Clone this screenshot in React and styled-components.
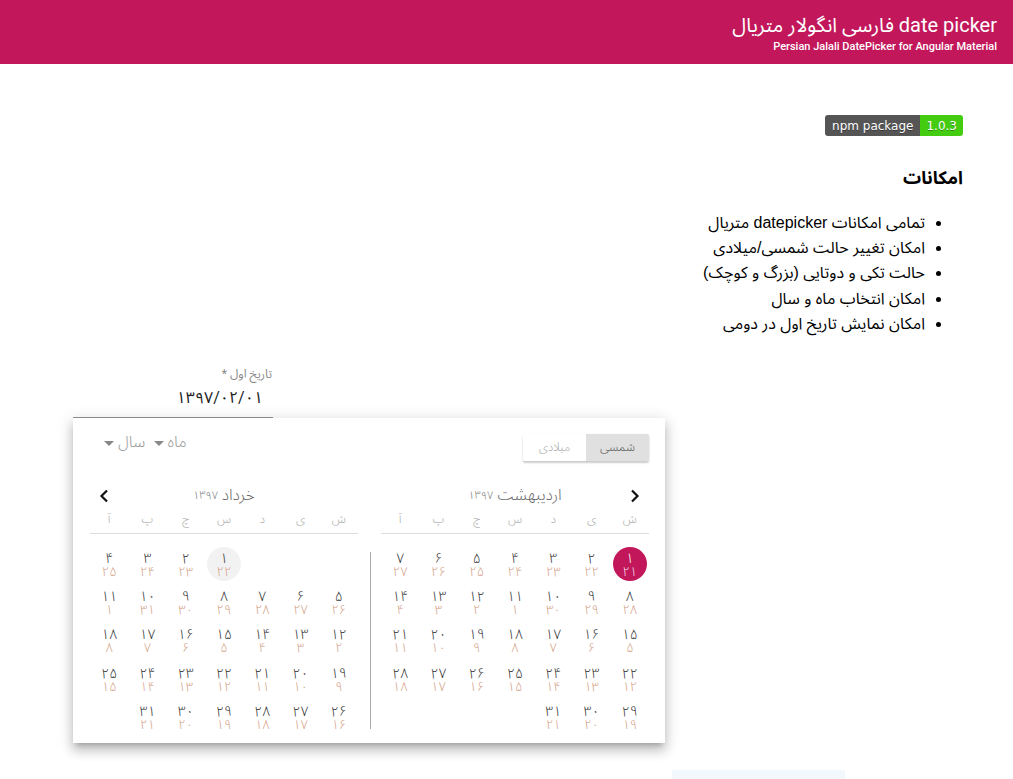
import React from 'react';
import styled, { createGlobalStyle } from 'styled-components';

const GlobalStyle = createGlobalStyle`
  body {
    margin: 0;
    background: #fff;
    font-family: Roboto, "Noto Sans Arabic", "DejaVu Sans", sans-serif;
    color: #000;
  }
`;

const fa = (n) => String(n).replace(/\d/g, (d) => '۰۱۲۳۴۵۶۷۸۹'[d]);

const Header = styled.header`
  height: 64px;
  background: #c2185b;
  color: #fff;
  display: flex;
  flex-direction: column;
  align-items: flex-start;
  justify-content: center;
  padding: 2px 16px 0;
  box-sizing: border-box;
  direction: rtl;
`;

const Title = styled.h1`
  margin: 0;
  font-size: 20px;
  font-weight: 400;
  line-height: 26px;
`;

const Subtitle = styled.div`
  font-size: 11px;
  font-weight: 500;
  line-height: 14px;
  margin-top: 2px;
  direction: ltr;
`;

const Main = styled.main`
  direction: rtl;
  padding: 51px 50px 0;
`;

const Badge = styled.div`
  display: flex;
  width: fit-content;
  direction: ltr;
  height: 21px;
  border-radius: 3px;
  overflow: hidden;
  font-family: "DejaVu Sans", Verdana, sans-serif;
  font-size: 12px;
  color: #fff;
  text-shadow: 0 1px 0 rgba(1, 1, 1, 0.35);
`;

const BadgePart = styled.span`
  display: flex;
  align-items: center;
  padding: 0 ${({ $pad }) => $pad}px;
  background: ${({ $bg }) => $bg};
`;

const SectionTitle = styled.h3`
  margin: 30px 0 0;
  font-family: "Liberation Sans", "Noto Sans Arabic", "DejaVu Sans", sans-serif;
  font-size: 18px;
  font-weight: 700;
  line-height: 24px;
`;

const FeatureList = styled.ul`
  margin: 20px 0 0;
  padding: 0 38px 0 0;
  font-family: "Liberation Sans", "Noto Sans Arabic", "DejaVu Sans", sans-serif;
  font-size: 16px;
  line-height: 25.2px;
`;

const PickerArea = styled.section`
  direction: ltr;
  padding-left: 73px;
  margin-top: 30px;
`;

const Field = styled.div`
  position: relative;
  width: 200px;
  direction: rtl;
  border-bottom: 1px solid #949494;
  padding-bottom: 9px;
`;

const FieldLabel = styled.div`
  font-size: 12px;
  color: #8a8a8a;
  line-height: 16px;
  padding-right: 1px;
`;

const FieldValue = styled.div`
  font-size: 16px;
  color: #222;
  line-height: 20px;
  padding-right: 10px;
  margin-top: 6px;
`;

const Popup = styled.div`
  position: absolute;
  top: calc(100% + 1px);
  left: 0;
  width: 592px;
  height: 325px;
  background: #fff;
  direction: rtl;
  box-sizing: border-box;
  padding: 16px 16px 0 17px;
  box-shadow: 0 5px 5px -3px rgba(0, 0, 0, 0.2), 0 8px 10px 1px rgba(0, 0, 0, 0.14),
    0 3px 14px 2px rgba(0, 0, 0, 0.12);
  z-index: 2;
`;

const TopBar = styled.div`
  display: flex;
  justify-content: space-between;
  align-items: flex-start;
  height: 27px;
`;

const ToggleGroup = styled.div`
  display: flex;
  border-radius: 2px;
  overflow: hidden;
  box-shadow: 0 2px 2px rgba(0, 0, 0, 0.2), 0 0 1px rgba(0, 0, 0, 0.12);
`;

const ToggleButton = styled.button`
  width: 63px;
  height: 27px;
  border: 0;
  padding: 0;
  font-family: inherit;
  font-weight: 300;
  font-size: 12px;
  color: ${({ $active }) => ($active ? '#555' : '#aaa')};
  background: ${({ $active }) => ($active ? '#e0e0e0' : '#fff')};
`;

const SelectGroup = styled.div`
  display: flex;
  gap: 8px;
  margin-left: 14px;
  margin-top: -2px;
  font-size: 16px;
  font-weight: 300;
  color: #999;
  line-height: 20px;
`;

const SelectItem = styled.span`
  display: flex;
  align-items: center;
  gap: 4px;

  &::after {
    content: '';
    border-left: 5px solid transparent;
    border-right: 5px solid transparent;
    border-top: 5px solid #888;
    margin-top: 2px;
  }
`;

const Months = styled.div`
  display: grid;
  grid-template-columns: 268px 268px;
  justify-content: space-between;
  margin-top: 24px;
`;

const Month = styled.div`
  display: flex;
  flex-direction: column;
`;

const MonthHeader = styled.div`
  position: relative;
  display: flex;
  justify-content: center;
  align-items: center;
  height: 20px;
`;

const MonthName = styled.span`
  font-size: 16px;
  font-weight: 300;
  color: #666;
`;

const MonthYear = styled.span`
  font-size: 11px;
  font-weight: 300;
  color: #777;
  margin-right: 4px;
`;

const NavButton = styled.span`
  position: absolute;
  top: 4px;
  ${({ $side }) => ($side === 'right' ? 'right: 9px;' : 'left: 9px;')}
  display: flex;
`;

const WeekRow = styled.div`
  display: grid;
  grid-template-columns: repeat(7, 1fr);
  margin-top: 6px;
  padding-bottom: 6px;
  border-bottom: 1px solid #ddd;
`;

const WeekDay = styled.span`
  text-align: center;
  font-size: 12px;
  font-weight: 300;
  color: #aaa;
  line-height: 16px;
`;

const DaysGrid = styled.div`
  position: relative;
  display: grid;
  grid-template-columns: repeat(7, 1fr);
  grid-auto-rows: 38.3px;
  margin-top: 11px;
`;

const Divider = styled.span`
  position: absolute;
  left: -11px;
  top: 7px;
  height: 177px;
  width: 1px;
  background: #aaa;
`;

const DayCell = styled.div`
  display: flex;
  align-items: center;
  justify-content: center;
`;

const DayCircle = styled.div`
  width: 34px;
  height: 34px;
  border-radius: 50%;
  display: flex;
  flex-direction: column;
  align-items: center;
  justify-content: center;
  background: ${({ $selected, $today }) => ($selected ? '#c2185b' : $today ? '#f2f2f2' : 'transparent')};
`;

const DayNum = styled.span`
  font-size: 14px;
  font-weight: 300;
  line-height: 14px;
  color: ${({ $selected }) => ($selected ? '#fff' : '#333')};
`;

const GregNum = styled.span`
  font-size: 13px;
  font-weight: 300;
  line-height: 13px;
  color: ${({ $selected }) => ($selected ? '#f6dbe5' : '#d4a189')};
`;

const GhostButton = styled.div`
  margin: 352px 0 0 599px;
  width: 173px;
  height: 20px;
  background: #f3f8fd;
`;

const Chevron = ({ dir }) => (
  <svg width="10" height="14" viewBox="0 0 10 14">
    <path
      d={dir === 'right' ? 'M2 1.5 L7.5 7 L2 12.5' : 'M8 1.5 L2.5 7 L8 12.5'}
      fill="none"
      stroke="#111"
      strokeWidth="2.2"
    />
  </svg>
);

const weekDays = ['ش', 'ی', 'د', 'س', 'چ', 'پ', 'آ'];

const months = [
  {
    name: 'اردیبهشت',
    offset: 0,
    days: 31,
    greg: (d) => (d <= 10 ? 20 + d : d - 10),
    selected: 1,
    nav: 'right',
    divided: true,
  },
  {
    name: 'خرداد',
    offset: 3,
    days: 31,
    greg: (d) => (d <= 10 ? 21 + d : d - 10),
    today: 1,
    nav: 'left',
  },
];

const MonthView = ({ month }) => {
  const cells = [];
  for (let i = 0; i < month.offset; i += 1) cells.push(<DayCell key={`e${i}`} />);
  for (let d = 1; d <= month.days; d += 1) {
    const selected = month.selected === d;
    cells.push(
      <DayCell key={d}>
        <DayCircle $selected={selected} $today={month.today === d}>
          <DayNum $selected={selected}>{fa(d)}</DayNum>
          <GregNum $selected={selected}>{fa(month.greg(d))}</GregNum>
        </DayCircle>
      </DayCell>
    );
  }
  return (
    <Month>
      <MonthHeader>
        <NavButton $side={month.nav}>
          <Chevron dir={month.nav} />
        </NavButton>
        <MonthName>{month.name}</MonthName>
        <MonthYear>{fa(1397)}</MonthYear>
      </MonthHeader>
      <WeekRow>
        {weekDays.map((w) => (
          <WeekDay key={w}>{w}</WeekDay>
        ))}
      </WeekRow>
      <DaysGrid>
        {month.divided && <Divider />}
        {cells}
      </DaysGrid>
    </Month>
  );
};

const App = () => {
  return (
    <>
      <GlobalStyle />
      <Header>
        <Title>date picker فارسی انگولار متریال</Title>
        <Subtitle>Persian Jalali DatePicker for Angular Material</Subtitle>
      </Header>
      <Main>
        <Badge>
          <BadgePart $bg="#555" $pad={7}>npm package</BadgePart>
          <BadgePart $bg="#4c1" $pad={6}>1.0.3</BadgePart>
        </Badge>
        <SectionTitle>امکانات</SectionTitle>
        <FeatureList>
          <li>تمامی امکانات datepicker متریال</li>
          <li>امکان تغییر حالت شمسی/میلادی</li>
          <li>حالت تکی و دوتایی (بزرگ و کوچک)</li>
          <li>امکان انتخاب ماه و سال</li>
          <li>امکان نمایش تاریخ اول در دومی</li>
        </FeatureList>
      </Main>
      <PickerArea>
        <Field>
          <FieldLabel>تاریخ اول *</FieldLabel>
          <FieldValue>{fa('1397/02/01')}</FieldValue>
          <Popup>
            <TopBar>
              <ToggleGroup>
                <ToggleButton $active>شمسی</ToggleButton>
                <ToggleButton>میلادی</ToggleButton>
              </ToggleGroup>
              <SelectGroup>
                <SelectItem>ماه</SelectItem>
                <SelectItem>سال</SelectItem>
              </SelectGroup>
            </TopBar>
            <Months>
              {months.map((m) => (
                <MonthView key={m.name} month={m} />
              ))}
            </Months>
          </Popup>
        </Field>
        <GhostButton />
      </PickerArea>
    </>
  );
};

export default App;
